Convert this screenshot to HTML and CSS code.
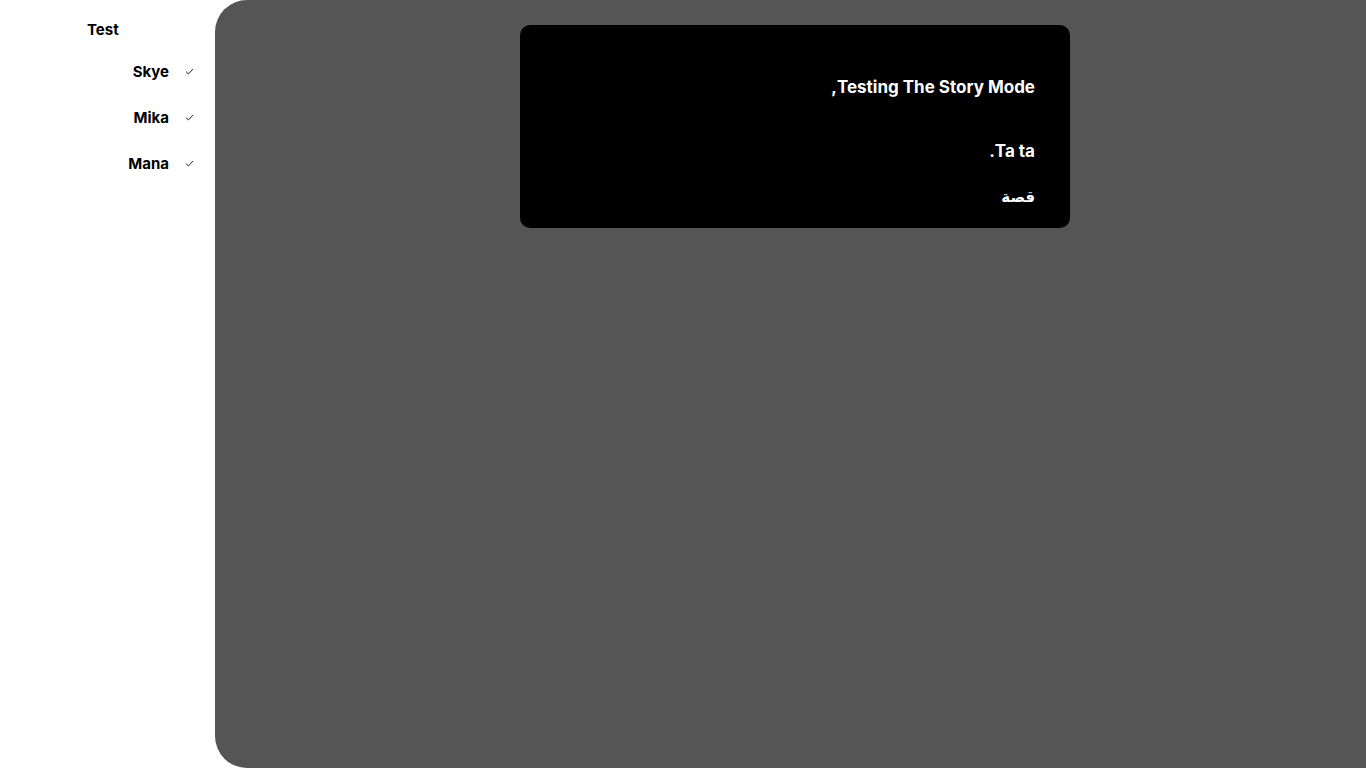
FILE: index.html
```html
<!DOCTYPE html>
<html lang="en">
<head>
<meta charset="utf-8">
<title>Story Mode</title>
<link rel="stylesheet" href="styles.css">
</head>
<body>
<div class="app">
  <aside class="sidebar">
    <div class="title">Test</div>
    <ul class="list">
      <li class="item"><span class="name">Skye</span><svg class="check" viewBox="0 0 10 8"><path d="M1 4.2 L3.8 6.8 L9 1.2" fill="none" stroke="#000" stroke-width="1"/></svg></li>
      <li class="item"><span class="name">Mika</span><svg class="check" viewBox="0 0 10 8"><path d="M1 4.2 L3.8 6.8 L9 1.2" fill="none" stroke="#000" stroke-width="1"/></svg></li>
      <li class="item"><span class="name">Mana</span><svg class="check" viewBox="0 0 10 8"><path d="M1 4.2 L3.8 6.8 L9 1.2" fill="none" stroke="#000" stroke-width="1"/></svg></li>
    </ul>
  </aside>
  <main class="stage">
    <section class="card" dir="rtl">
      <p class="line l1">Testing The Story Mode,</p>
      <p class="line l2">Ta ta.</p>
      <p class="line l3">قصة</p>
    </section>
  </main>
</div>
</body>
</html>
```
FILE: styles.css
```css
html, body {
  margin: 0;
  padding: 0;
  height: 100%;
  background: #fff;
  font-family: "Inter", "Noto Sans", sans-serif;
}
.app {
  display: flex;
  height: 768px;
}
.sidebar {
  width: 215px;
  flex: 0 0 215px;
  box-sizing: border-box;
}
.title {
  font-weight: 700;
  font-size: 15px;
  color: #000;
  margin: 21px 0 0 87px;
  line-height: 18px;
}
.list {
  list-style: none;
  margin: 9px 0 0 0;
  padding: 0;
}
.item {
  display: flex;
  justify-content: flex-end;
  align-items: center;
  height: 46px;
  padding-right: 21px;
  box-sizing: border-box;
}
.name {
  font-weight: 700;
  font-size: 15px;
  color: #000;
}
.check {
  width: 9px;
  height: 7px;
  margin-left: 16px;
}
.stage {
  flex: 1;
  background: #555555;
  border-radius: 32px 0 0 32px;
  padding-top: 25px;
  box-sizing: border-box;
}
.card {
  width: 550px;
  margin-left: 305px;
  background: #000;
  border-radius: 10px;
  box-sizing: border-box;
  padding: 50px 35px 19px 35px;
  color: #fff;
  font-weight: 700;
}
.line {
  margin: 0;
  font-size: 17px;
  line-height: 24px;
}
.l2 {
  margin-top: 40px;
}
.l3 {
  margin-top: 22px;
  font-family: "DejaVu Sans", sans-serif;
  font-weight: 600;
  font-size: 15px;
}
```
